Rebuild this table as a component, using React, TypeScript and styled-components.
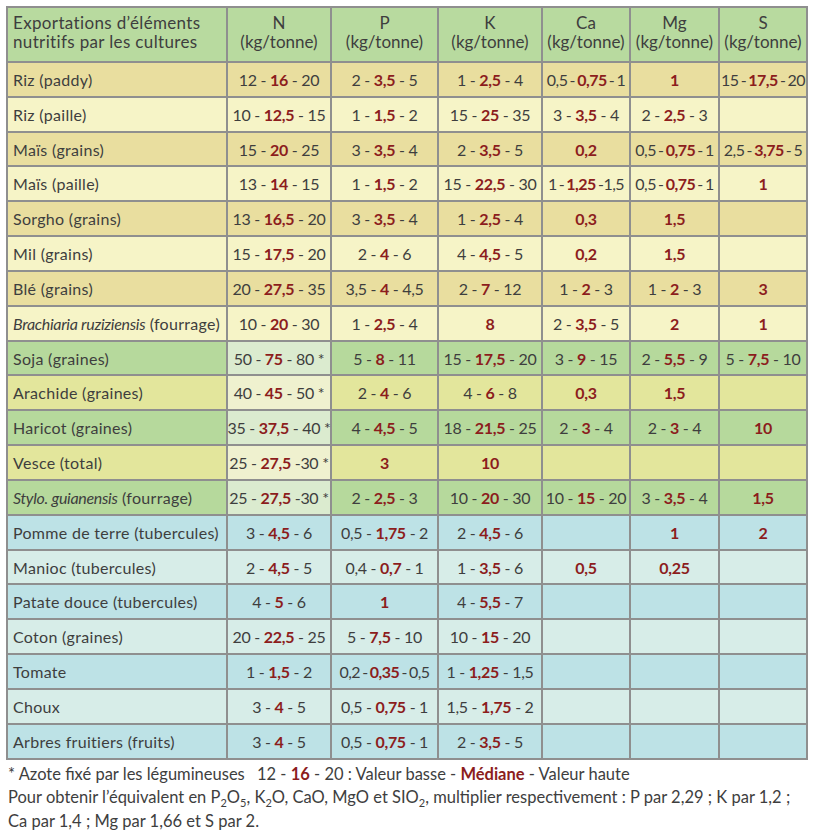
import React from 'react';
import styled, { createGlobalStyle } from 'styled-components';

const GlobalStyle = createGlobalStyle`
  html, body { margin: 0; padding: 0; background: #ffffff; }
  body { font-family: Lato, "Open Sans", "Liberation Sans", sans-serif; color: #3e3e3e; }
`;

type Tone = 'head' | 'cd' | 'cl' | 'lg' | 'ly' | 'bd' | 'bl';

const TONES: Record<Tone, { main: string; n: string }> = {
  head: { main: '#b8da9f', n: '#b8da9f' },
  cd: { main: '#e9de9f', n: '#e9de9f' },
  cl: { main: '#f6f4c7', n: '#f6f4c7' },
  lg: { main: '#b6d99c', n: '#dbebcf' },
  ly: { main: '#e3e69c', n: '#eff1cf' },
  bd: { main: '#bde2e6', n: '#bde2e6' },
  bl: { main: '#d7ede8', n: '#d7ede8' },
};

const Page = styled.div`
  padding: 6px 0 0 6px;
  width: 818px;
  height: 832px;
  box-sizing: border-box;
  overflow: hidden;
`;

const Table = styled.div`
  display: flex;
  flex-direction: column;
  gap: 2px;
  width: 802px;
  box-sizing: border-box;
  padding: 2px;
  background: #8f8f8f;
`;

const Row = styled.div<{ $head?: boolean }>`
  display: grid;
  grid-template-columns: 218px 102px 105px 102px 86px 87px 86px;
  gap: 2px;
  height: ${(p) => (p.$head ? '53px' : '32.84px')};
`;

const LabelCell = styled.div<{ $bg: string }>`
  background: ${(p) => p.$bg};
  display: flex;
  align-items: center;
  padding: 0 0 0 5px;
  font-size: 16px;
  letter-spacing: 0.3px;
  white-space: pre;
`;

const ValueCell = styled.div<{ $bg: string; $tight?: boolean }>`
  background: ${(p) => p.$bg};
  display: flex;
  align-items: center;
  justify-content: center;
  font-size: 16px;
  white-space: pre;
  letter-spacing: ${(p) => (p.$tight ? '-0.5px' : '-0.3px')};
  word-spacing: ${(p) => (p.$tight ? '-1.5px' : '0')};
`;

const HeadCell = styled.div<{ $left?: boolean }>`
  background: ${TONES.head.main};
  display: flex;
  flex-direction: column;
  justify-content: center;
  align-items: ${(p) => (p.$left ? 'flex-start' : 'center')};
  padding: ${(p) => (p.$left ? '0 0 5px 5px' : '0 0 5px 0')};
  font-size: 17px;
  line-height: 19px;
  letter-spacing: ${(p) => (p.$left ? '0.35px' : '0')};
  white-space: nowrap;
`;

const Med = styled.b`
  color: #8c1d1d;
  font-weight: 700;
`;

const Ital = styled.i`
  font-style: italic;
  letter-spacing: -0.3px;
`;

const Footer = styled.div`
  display: flex;
  flex-direction: column;
  gap: 3.5px;
  padding: 4px 0 0 2px;
  font-size: 16.5px;
  line-height: 20px;
`;

const LegendLine = styled.div`
  display: grid;
  grid-template-columns: 249px auto;
  white-space: nowrap;
`;

const Line = styled.div`
  white-space: nowrap;
`;

const Sub = styled.sub`
  font-size: 11px;
  line-height: 0;
  vertical-align: -4px;
`;

type RowData = { label: React.ReactNode; tone: Tone; v: string[] };

const rows: RowData[] = [
  { label: 'Riz (paddy)', tone: 'cd', v: ['12 - [16] - 20', '2 - [3,5] - 5', '1 - [2,5] - 4', '~0,5 - [0,75] - 1', '[1]', '~15 - [17,5] - 20'] },
  { label: 'Riz (paille)', tone: 'cl', v: ['10 - [12,5] - 15', '1 - [1,5] - 2', '15 - [25] - 35', '3 - [3,5] - 4', '2 - [2,5] - 3', ''] },
  { label: 'Maïs (grains)', tone: 'cd', v: ['15 - [20] - 25', '3 - [3,5] - 4', '2 - [3,5] - 5', '[0,2]', '~0,5 - [0,75] - 1', '~2,5 - [3,75] - 5'] },
  { label: 'Maïs (paille)', tone: 'cl', v: ['13 - [14] - 15', '1 - [1,5] - 2', '15 - [22,5] - 30', '~1 - [1,25] -1,5', '~0,5 - [0,75] - 1', '[1]'] },
  { label: 'Sorgho (grains)', tone: 'cd', v: ['13 - [16,5] - 20', '3 - [3,5] - 4', '1 - [2,5] - 4', '[0,3]', '[1,5]', ''] },
  { label: 'Mil (grains)', tone: 'cl', v: ['15 - [17,5] - 20', '2 - [4] - 6', '4 - [4,5] - 5', '[0,2]', '[1,5]', ''] },
  { label: 'Blé (grains)', tone: 'cd', v: ['20 - [27,5] - 35', '3,5 - [4] - 4,5', '2 - [7] - 12', '1 - [2] - 3', '1 - [2] - 3', '[3]'] },
  {
    label: (
      <>
        <Ital>Brachiaria ruziziensis</Ital> (fourrage)
      </>
    ),
    tone: 'cl',
    v: ['10 - [20] - 30', '1 - [2,5] - 4', '[8]', '2 - [3,5] - 5', '[2]', '[1]'],
  },
  { label: 'Soja (graines)', tone: 'lg', v: ['50 - [75] - 80 *', '5 - [8] - 11', '15 - [17,5] - 20', '3 - [9] - 15', '2 - [5,5] - 9', '5 - [7,5] - 10'] },
  { label: 'Arachide (graines)', tone: 'ly', v: ['40 - [45] - 50 *', '2 - [4] - 6', '4 - [6] - 8', '[0,3]', '[1,5]', ''] },
  { label: 'Haricot (graines)', tone: 'lg', v: ['35 - [37,5] - 40 *', '4 - [4,5] - 5', '18 - [21,5] - 25', '2 - [3] - 4', '2 - [3] - 4', '[10]'] },
  { label: 'Vesce (total)', tone: 'ly', v: ['25 - [27,5] -30 *', '[3]', '[10]', '', '', ''] },
  {
    label: (
      <>
        <Ital>Stylo. guianensis</Ital> (fourrage)
      </>
    ),
    tone: 'lg',
    v: ['25 - [27,5] -30 *', '2 - [2,5] - 3', '10 - [20] - 30', '10 - [15] - 20', '3 - [3,5] - 4', '[1,5]'],
  },
  { label: 'Pomme de terre (tubercules)', tone: 'bd', v: ['3 - [4,5] - 6', '0,5 - [1,75] - 2', '2 - [4,5] - 6', '', '[1]', '[2]'] },
  { label: 'Manioc (tubercules)', tone: 'bl', v: ['2 - [4,5] - 5', '0,4 - [0,7] - 1', '1 - [3,5] - 6', '[0,5]', '[0,25]', ''] },
  { label: 'Patate douce (tubercules)', tone: 'bd', v: ['4 - [5] - 6', '[1]', '4 - [5,5] - 7', '', '', ''] },
  { label: 'Coton (graines)', tone: 'bl', v: ['20 - [22,5] - 25', '5 - [7,5] - 10', '10 - [15] - 20', '', '', ''] },
  { label: 'Tomate', tone: 'bd', v: ['1 - [1,5] - 2', '~0,2 - [0,35] - 0,5', '1 - [1,25] - 1,5', '', '', ''] },
  { label: 'Choux', tone: 'bl', v: ['3 - [4] - 5', '0,5 - [0,75] - 1', '1,5 - [1,75] - 2', '', '', ''] },
  { label: 'Arbres fruitiers (fruits)', tone: 'bd', v: ['3 - [4] - 5', '0,5 - [0,75] - 1', '2 - [3,5] - 5', '', '', ''] },
];

const heads = ['N', 'P', 'K', 'Ca', 'Mg', 'S'];

function renderValue(s: string): React.ReactNode {
  const parts = s.split(/(\[[^\]]+\])/);
  return parts.map((p, i) =>
    p.startsWith('[') ? <Med key={i}>{p.slice(1, -1)}</Med> : <React.Fragment key={i}>{p}</React.Fragment>
  );
}

export default function App() {
  return (
    <Page>
      <GlobalStyle />
      <Table>
        <Row $head>
          <HeadCell $left>
            <span>Exportations d’éléments</span>
            <span>nutritifs par les cultures</span>
          </HeadCell>
          {heads.map((h) => (
            <HeadCell key={h}>
              <span>{h}</span>
              <span>(kg/tonne)</span>
            </HeadCell>
          ))}
        </Row>
        {rows.map((r, i) => {
          const tone = TONES[r.tone];
          return (
            <Row key={i}>
              <LabelCell $bg={tone.main}>{r.label}</LabelCell>
              {r.v.map((v, j) => {
                const tight = v.startsWith('~');
                const text = tight ? v.slice(1) : v;
                return (
                  <ValueCell key={j} $bg={j === 0 ? tone.n : tone.main} $tight={tight}>
                    {renderValue(text)}
                  </ValueCell>
                );
              })}
            </Row>
          );
        })}
      </Table>
      <Footer>
        <LegendLine>
          <span>* Azote fixé par les légumineuses</span>
          <span>
            12 - <Med>16</Med> - 20 : Valeur basse - <Med>Médiane</Med> - Valeur haute
          </span>
        </LegendLine>
        <Line>
          Pour obtenir l’équivalent en P<Sub>2</Sub>O<Sub>5</Sub>, K<Sub>2</Sub>O, CaO, MgO et SIO<Sub>2</Sub>, multiplier
          respectivement : P par 2,29 ; K par 1,2 ;
        </Line>
        <Line>Ca par 1,4 ; Mg par 1,66 et S par 2.</Line>
      </Footer>
    </Page>
  );
}
